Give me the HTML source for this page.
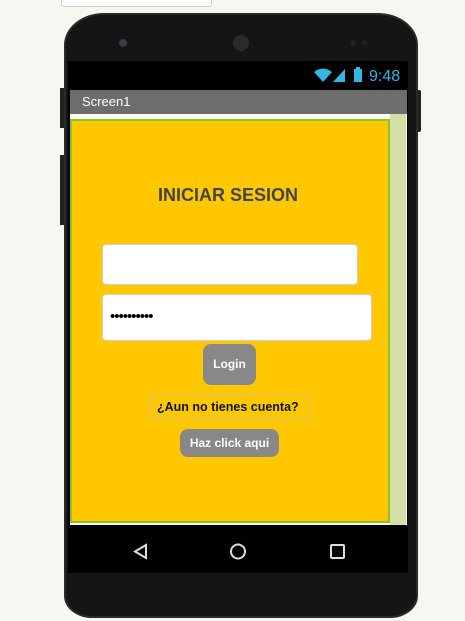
<!DOCTYPE html>
<html><head><style>
body{margin:0;width:465px;height:621px;background:#f7f7f2;position:relative;overflow:hidden;font-family:"Liberation Sans",Arial,sans-serif}
div{position:absolute;box-sizing:border-box}
</style></head><body>
<div style="left:61px;top:-4px;width:151px;height:11px;background:#fff;border:1px solid #ccc;border-radius:3px"></div>
<div style="left:60px;top:88px;width:5px;height:40px;background:#222"></div>
<div style="left:415px;top:90px;width:6px;height:42px;background:#222;border-radius:2px"></div>
<div style="left:60px;top:155px;width:5px;height:70px;background:#222"></div>
<div style="left:64px;top:13px;width:354px;height:605px;background:#151515;border-radius:40px 40px 28px 28px/32px 32px 22px 22px;border:2px solid #2a2a2a"></div>
<div style="left:119px;top:39px;width:8px;height:8px;background:#3a3a48;border-radius:50%"></div>
<div style="left:233px;top:35px;width:16px;height:16px;background:#2a2a2a;border-radius:50%"></div>
<div style="left:350px;top:40px;width:6px;height:6px;background:#222;border-radius:50%"></div>
<div style="left:362px;top:40px;width:5px;height:5px;background:#222;border-radius:50%"></div>
<div style="left:68px;top:61px;width:340px;height:512px;background:#000"></div>
<svg style="position:absolute;left:313px;top:66px" width="90" height="18" viewBox="0 0 90 18">
<path d="M1 6 Q10 -1 19 6 L10 16 Z" fill="#33b5e5"/>
<path d="M20 16 L32 3 L32 16 Z" fill="#33b5e5"/>
<rect x="41" y="3" width="8" height="13" fill="#33b5e5"/><rect x="43" y="1" width="4" height="2" fill="#33b5e5"/>
<text x="56" y="15" font-family="Liberation Sans" font-size="16" fill="#33b5e5">9:48</text></svg>
<div style="left:70px;top:90px;width:337px;height:24px;background:#6d6d6d;color:#fff;font-size:13px;padding:4px 0 0 12px">Screen1</div>
<div style="left:70px;top:114px;width:337px;height:411px;background:#fff"></div>
<div style="left:390px;top:114px;width:16px;height:411px;background:#d3dfa6"></div>
<div style="left:70px;top:119px;width:320px;height:404px;background:#ffc800;border:2px solid #8fc31f"></div>
<div style="left:70px;top:185px;width:316px;text-align:center;font-weight:bold;font-size:18px;color:#444">INICIAR SESION</div>
<div style="left:102px;top:244px;width:256px;height:41px;background:#fff;border:1px solid #ccc;border-radius:4px"></div>
<div style="left:102px;top:294px;width:270px;height:47px;background:#fff;border:1px solid #ccc;border-radius:4px;font-size:15px;padding:13px 0 0 7px;letter-spacing:-1px">••••••••••</div>
<div style="left:203px;top:344px;width:53px;height:41px;background:#888;border-radius:8px;color:#fff;font-weight:bold;font-size:12px;text-align:center;line-height:41px">Login</div>
<div style="left:150px;top:394px;width:160px;height:26px;border:1px solid #d6c27a;border-radius:2px;font-size:12.5px;font-weight:bold;color:#111;padding:5px 0 0 6px;white-space:nowrap">¿Aun no tienes cuenta?</div>
<div style="left:180px;top:429px;width:99px;height:28px;background:#888;border-radius:8px;color:#fff;font-weight:bold;font-size:12px;text-align:center;line-height:28px">Haz click aqui</div>
<svg style="position:absolute;left:68px;top:528px" width="340" height="45">
<path d="M78 17 L78 30 L67 23.5 Z" fill="none" stroke="#ddd" stroke-width="2"/>
<circle cx="170" cy="23.5" r="7" fill="none" stroke="#ddd" stroke-width="2"/>
<rect x="263" y="17" width="13" height="13" rx="1" fill="none" stroke="#ddd" stroke-width="2"/>
</svg>
</body></html>
